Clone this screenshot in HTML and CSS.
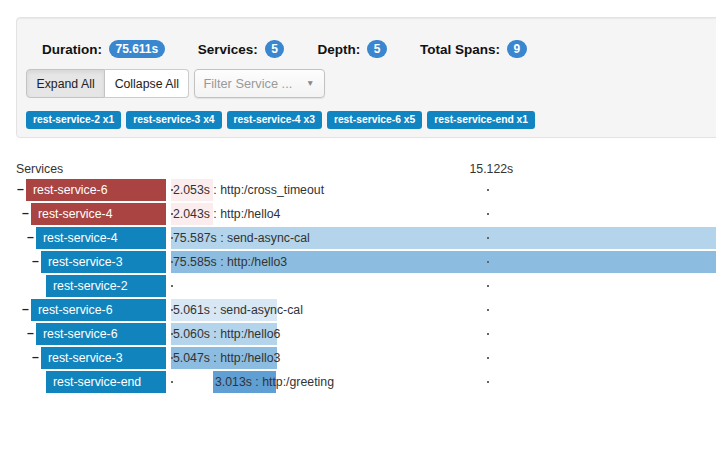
FILE: index.html
```html
<!DOCTYPE html>
<html>
<head>
<meta charset="utf-8">
<link rel="stylesheet" href="styles.css">
</head>
<body>
<div class="page">
  <div class="panel">
    <div class="stats">
      <span class="stat">Duration:<span class="badge">75.611s</span></span>
      <span class="stat">Services:<span class="badge">5</span></span>
      <span class="stat">Depth:<span class="badge">5</span></span>
      <span class="stat">Total Spans:<span class="badge">9</span></span>
    </div>
    <div class="controls">
      <div class="btn-group">
        <button class="btn active">Expand All</button><button class="btn">Collapse All</button>
      </div>
      <div class="select"><span class="placeholder">Filter Service ...</span><span class="caret">▼</span></div>
    </div>
    <div class="labels">
      <span class="label">rest-service-2 x1</span>
      <span class="label">rest-service-3 x4</span>
      <span class="label">rest-service-4 x3</span>
      <span class="label">rest-service-6 x5</span>
      <span class="label">rest-service-end x1</span>
    </div>
  </div>

  <div class="trace">
    <div class="trace-head">
      <div class="svc-head">Services</div>
      <div class="timeline"><span class="tick-label" style="left:20%">15.122s</span></div>
    </div>

    <div class="row">
      <div class="svc d0"><span class="toggle">–</span><span class="svc-name err">rest-service-6</span></div>
      <div class="timeline"><div class="bar c-pink" style="left:0%;width:2.66%">2.053s : http:/cross_timeout</div><i class="tick" style="left:0%"></i><i class="tick" style="left:20%"></i></div>
    </div>
    <div class="row">
      <div class="svc d1"><span class="toggle">–</span><span class="svc-name err">rest-service-4</span></div>
      <div class="timeline"><div class="bar c-pink" style="left:0%;width:2.66%">2.043s : http:/hello4</div><i class="tick" style="left:0%"></i><i class="tick" style="left:20%"></i></div>
    </div>
    <div class="row">
      <div class="svc d2"><span class="toggle">–</span><span class="svc-name">rest-service-4</span></div>
      <div class="timeline"><div class="bar c-b2" style="left:0%;width:99.97%">75.587s : send-async-cal</div><i class="tick" style="left:0%"></i><i class="tick" style="left:20%"></i></div>
    </div>
    <div class="row">
      <div class="svc d3"><span class="toggle">–</span><span class="svc-name">rest-service-3</span></div>
      <div class="timeline"><div class="bar c-b3" style="left:0%;width:99.96%">75.585s : http:/hello3</div><i class="tick" style="left:0%"></i><i class="tick" style="left:20%"></i></div>
    </div>
    <div class="row">
      <div class="svc d4"><span class="toggle"></span><span class="svc-name">rest-service-2</span></div>
      <div class="timeline"><i class="tick" style="left:0%"></i><i class="tick" style="left:20%"></i></div>
    </div>
    <div class="row">
      <div class="svc d1"><span class="toggle">–</span><span class="svc-name">rest-service-6</span></div>
      <div class="timeline"><div class="bar c-b1" style="left:0%;width:6.69%">5.061s : send-async-cal</div><i class="tick" style="left:0%"></i><i class="tick" style="left:20%"></i></div>
    </div>
    <div class="row">
      <div class="svc d2"><span class="toggle">–</span><span class="svc-name">rest-service-6</span></div>
      <div class="timeline"><div class="bar c-b2" style="left:0%;width:6.69%">5.060s : http:/hello6</div><i class="tick" style="left:0%"></i><i class="tick" style="left:20%"></i></div>
    </div>
    <div class="row">
      <div class="svc d3"><span class="toggle">–</span><span class="svc-name">rest-service-3</span></div>
      <div class="timeline"><div class="bar c-b3" style="left:0%;width:6.68%">5.047s : http:/hello3</div><i class="tick" style="left:0%"></i><i class="tick" style="left:20%"></i></div>
    </div>
    <div class="row">
      <div class="svc d4"><span class="toggle"></span><span class="svc-name">rest-service-end</span></div>
      <div class="timeline"><div class="bar c-b4" style="left:2.66%;width:3.99%">3.013s : http:/greeting</div><i class="tick" style="left:0%"></i><i class="tick" style="left:20%"></i></div>
    </div>
  </div>
</div>
</body>
</html>
```

FILE: styles.css
```css
html { overflow: hidden; }
body {
  margin: 0;
  font-family: "Liberation Sans", Arial, sans-serif;
  font-size: 12px;
  color: #333;
  background: #fff;
}
.page {
  width: 1740px;
  padding: 17px 0 0 16px;
}
.panel {
  background: #f5f5f5;
  border: 1px solid #e3e3e3;
  border-radius: 4px;
  padding: 22px 9px 8px;
  box-shadow: inset 0 1px 1px rgba(0,0,0,.05);
}
.stats {
  display: flex;
  align-items: center;
  gap: 33px;
  padding-left: 16px;
  height: 18px;
}
.stat {
  display: flex;
  align-items: center;
  gap: 7px;
  font-weight: bold;
  font-size: 13.5px;
  color: #111;
}
.badge {
  background: #3a87d0;
  color: #fff;
  font-size: 12px;
  font-weight: bold;
  height: 18px;
  line-height: 18px;
  padding: 0 6.5px;
  border-radius: 9px;
}
.controls {
  display: flex;
  gap: 5px;
  margin-top: 11px;
}
.btn-group { display: flex; }
.btn {
  height: 29px;
  padding: 0 9.5px;
  font: 12.3px "Liberation Sans", Arial, sans-serif;
  color: #222;
  background: #fff;
  border: 1px solid #ccc;
  margin: 0;
}
.btn:first-child { border-radius: 4px 0 0 4px; }
.btn:last-child { border-radius: 0 4px 4px 0; border-left: 0; }
.btn.active {
  background: #e6e6e6;
  border-color: #c4c4c4;
  box-shadow: inset 0 2px 4px rgba(0,0,0,.08);
}
.select {
  width: 131px;
  height: 29px;
  box-sizing: border-box;
  border: 1px solid #c2c2c2;
  border-radius: 4px;
  background: linear-gradient(#fdfdfd, #f3f3f3);
  box-shadow: 0 1px 1px rgba(0,0,0,.08);
  display: flex;
  align-items: center;
  justify-content: space-between;
  padding: 0 10px 0 8px;
}
.placeholder { color: #999; font-size: 12.8px; }
.caret { color: #888; font-size: 8.5px; margin-top: -2px; }
.labels {
  display: flex;
  gap: 5px;
  margin-top: 13px;
}
.label {
  background: #1185c2;
  color: #fff;
  font-weight: bold;
  font-size: 10.3px;
  height: 18px;
  line-height: 18px;
  padding: 0 7px;
  border-radius: 3px;
}
.trace { margin-top: 23px; }
.trace-head {
  display: flex;
  height: 16px;
  line-height: 16px;
  margin-bottom: 2px;
  font-size: 12.3px;
}
.svc-head { width: 150px; flex: none; }
.timeline {
  width: 1580px;
  margin-left: 5px;
  position: relative;
  flex: none;
}
.tick-label {
  position: absolute;
  top: 0;
  transform: translateX(-40%);
}
.row {
  display: flex;
  height: 22px;
  margin-bottom: 2px;
  font-size: 12.3px;
}
.svc {
  width: 150px;
  flex: none;
  display: flex;
  box-sizing: border-box;
}
.d1 { padding-left: 5px; }
.d2 { padding-left: 10px; }
.d3 { padding-left: 15px; }
.d4 { padding-left: 20px; }
.toggle {
  width: 10px;
  flex: none;
  line-height: 21px;
  font-weight: bold;
  color: #222;
  padding-left: 1px;
  box-sizing: border-box;
}
.svc-name {
  flex: 1;
  background: #1184bd;
  color: #fff;
  padding-left: 7px;
  line-height: 22px;
  white-space: nowrap;
  overflow: hidden;
}
.svc-name.err { background: #a94442; }
.bar {
  position: absolute;
  top: 0;
  height: 22px;
  line-height: 22px;
  padding-left: 2px;
  box-sizing: border-box;
  white-space: nowrap;
  color: #333;
}
.c-pink { background: #fbeded; }
.c-b1 { background: #d7e7f4; }
.c-b2 { background: #b3d4eb; }
.c-b3 { background: #8cbde0; }
.c-b4 { background: #5f9fd3; }
.tick {
  position: absolute;
  top: 10px;
  width: 2px;
  height: 2px;
  background: #666;
}
```
